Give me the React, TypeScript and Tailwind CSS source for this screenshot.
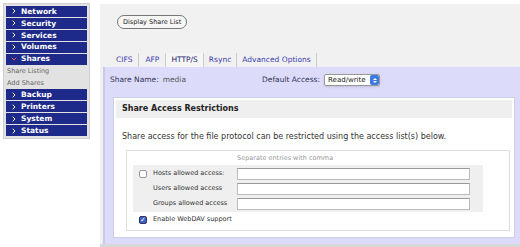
import { ChevronRight, ChevronDown } from "lucide-react";

const navTop = ["Network", "Security", "Services", "Volumes"];
const navBottom = ["Backup", "Printers", "System", "Status"];

const NavItem = ({ label, open }: { label: string; open?: boolean }) => (
  <div className="h-[11px] bg-[#1e2a8a] flex items-center pl-[4px] gap-[3px] text-white text-[7.5px] font-bold leading-none">
    {open ? (
      <ChevronDown size={8} strokeWidth={3} className="text-[#e06070]" />
    ) : (
      <ChevronRight size={8} strokeWidth={3} className="text-white" />
    )}
    <span>{label}</span>
  </div>
);

const SubItem = ({ label }: { label: string }) => (
  <div className="h-[11px] flex items-center pl-px text-[6.5px] text-[#666] leading-none">{label}</div>
);

const Field = ({ label, box }: { label: string; box?: boolean }) => (
  <div className="h-[15px] flex items-center">
    <div className="w-[20px] flex justify-center">
      {box && <div className="w-[8px] h-[8px] border border-[#999] rounded-[2px] bg-white" />}
    </div>
    <div className="w-[84px] text-[6.5px] text-[#333]">{label}</div>
    <div className="w-[233px] h-[12px] bg-white border border-[#bbb] border-t-[#999]" />
  </div>
);

export default function App() {
  return (
    <div className="w-[520px] h-[247px] bg-white flex overflow-hidden font-['DejaVu_Sans',sans-serif]">
      {/* sidebar */}
      <div className="ml-[3px] mt-[3px] w-[87px] h-[136px] bg-[#e2e2e2] border border-[#cfcfcf] p-[2px] flex flex-col gap-px">
        {navTop.map((n) => (
          <NavItem key={n} label={n} />
        ))}
        <NavItem label="Shares" open />
        <SubItem label="Share Listing" />
        <SubItem label="Add Shares" />
        {navBottom.map((n) => (
          <NavItem key={n} label={n} />
        ))}
      </div>

      {/* main */}
      <div className="ml-[10px] mt-[4px] flex-1 flex flex-col bg-[#f1f1f1]">
        <div className="pl-[17px] pt-[11px] flex">
          <button className="h-[14px] px-[5px] rounded-full border border-[#777] bg-[#f6f6f6] text-[6.5px] text-[#222] leading-none">
            Display Share List
          </button>
        </div>

        <div className="mt-[24px] h-[14px] flex items-end pl-[10px] text-[7.5px] text-[#3b3bb0] leading-none">
          <div className="px-[6px] h-[14px] flex items-center border-r border-[#ccc]">CIFS</div>
          <div className="px-[6px] h-[14px] flex items-center border-r border-[#ccc]">AFP</div>
          <div className="px-[5px] h-[14px] flex items-center border-r border-[#ccc] text-[#22226e] bg-[#f6f6f6]">HTTP/S</div>
          <div className="px-[5px] h-[14px] flex items-center border-r border-[#ccc]">Rsync</div>
          <div className="px-[5px] h-[14px] flex items-center border-r border-[#ccc]">Advanced Options</div>
        </div>

        <div className="flex-1 ml-[3px] bg-[#dcdcfa] border-l-2 border-[#c9c9ec] flex flex-col pb-[6px]">
          <div className="h-[30px] flex items-start pt-[7px] text-[7.5px] pl-[5px]">
            <div className="h-[12px] flex items-center">
              <span className="text-[#333355]">Share Name:</span>
              <span className="ml-[4px] text-[#555]">media</span>
              <span className="ml-[76px] text-[#333355]">Default Access:</span>
            </div>
            <div className="ml-[4px] w-[56px] h-[12px] bg-white border border-[#999] rounded-[2px] flex items-center justify-between pl-[3px] shadow-sm text-[7px]">
              <span className="text-[#222]">Read/write</span>
              <div className="w-[9px] h-[10px] bg-[#3d7be0] rounded-[2px] flex flex-col items-center justify-center gap-px">
                <div className="w-0 h-0 border-x-[2px] border-x-transparent border-b-[2px] border-b-white" />
                <div className="w-0 h-0 border-x-[2px] border-x-transparent border-t-[2px] border-t-white" />
              </div>
            </div>
          </div>

          <div className="ml-[8px] mr-[5px] flex-1 bg-white border border-[#cfcfe4] p-[2px] flex flex-col">
            <div className="h-[18px] bg-[#efefef] flex items-center pl-[6px] text-[8px] font-bold text-[#222]">
              Share Access Restrictions
            </div>
            <div className="pl-[6px] pt-[13px] h-[32px] text-[8px] text-[#333]">
              Share access for the file protocol can be restricted using the access list(s) below.
            </div>
            <div className="ml-[10px] mr-[2px] mb-[4px] flex-1 border border-[#ddd] flex flex-col pl-[6px] pt-[3px]">
              <div className="pl-[104px] text-[6.5px] text-[#999] h-[11px]">Separate entries with comma</div>
              <div className="w-[350px] bg-[#efefef] py-px">
                <Field label="Hosts allowed access:" box />
                <Field label="Users allowed access" />
                <Field label="Groups allowed access" />
              </div>
              <div className="h-[16px] flex items-center">
                <div className="w-[20px] flex justify-center">
                  <div className="w-[8px] h-[8px] border border-[#335] rounded-[2px] bg-[#3b5fc8] flex items-center justify-center text-white text-[7px] leading-none">
                    ✓
                  </div>
                </div>
                <div className="text-[6.5px] text-[#333]">Enable WebDAV support</div>
              </div>
            </div>
          </div>
        </div>
        <div className="h-[3px] bg-[#d8d8d8]" />
      </div>
    </div>
  );
}
